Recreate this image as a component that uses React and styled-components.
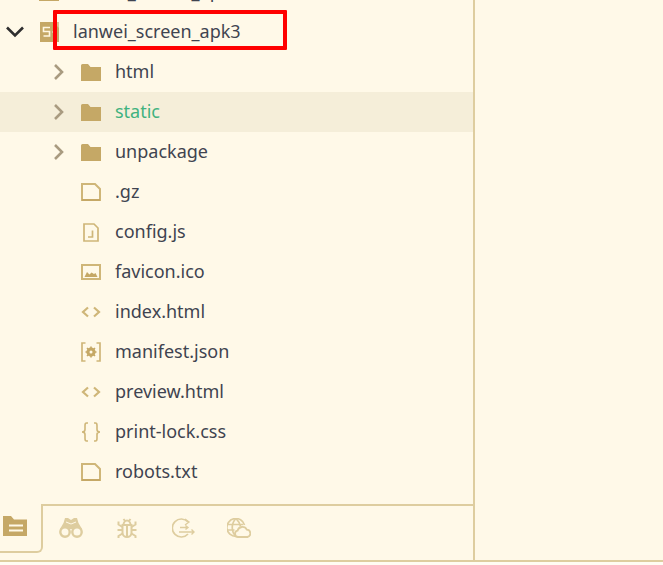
import React from "react";
import styled, { createGlobalStyle } from "styled-components";

const BG = "#fff9e8";
const LINE = "#decd9f";
const TAN = "#c5a866";
const FILE = "#cfb678";

const Global = createGlobalStyle`
  html, body { margin: 0; padding: 0; background: #fffcf3; }
  body { font-family: "Noto Sans", "Open Sans", sans-serif; }
`;

const Page = styled.div`
  width: 663px;
  height: 565px;
  overflow: hidden;
`;
const Frame = styled.div`
  display: flex;
  height: 560px;
  background: ${BG};
  border-bottom: 2px solid ${LINE};
`;
const Sidebar = styled.aside`
  width: 473px;
  display: flex;
  flex-direction: column;
  border-right: 2px solid ${LINE};
`;
const Tree = styled.div`
  flex: 1;
  min-height: 0;
  overflow: hidden;
  display: flex;
  flex-direction: column;
  justify-content: flex-end;
  padding-bottom: 12px;
`;
const Row = styled.div`
  position: relative;
  flex: 0 0 40px;
  height: 40px;
  display: flex;
  align-items: center;
  padding-left: ${(p) => p.$level * 42}px;
  background: ${(p) => (p.$selected ? "#f5eed9" : "transparent")};
`;
const Twist = styled.span`
  flex: 0 0 38px;
  box-sizing: border-box;
  padding-left: ${(p) => (p.$level ? 10 : 5)}px;
  display: flex;
  align-items: center;
`;
const IconSlot = styled.span`
  flex: 0 0 22px;
  height: 22px;
  display: flex;
  align-items: center;
  justify-content: center;
`;
const Name = styled.span`
  margin: 0 0 2px 13px;
  font-size: 18px;
  line-height: 24px;
  white-space: nowrap;
  color: ${(p) => (p.$green ? "#3fb27f" : "#3f4450")};
`;
const Callout = styled.div`
  position: absolute;
  left: 53px;
  top: -2px;
  width: 234px;
  height: 40px;
  box-sizing: border-box;
  border: 4px solid #ff0000;
  border-radius: 1px;
`;
const TabBar = styled.div`
  flex: 0 0 56px;
  display: flex;
  align-items: flex-start;
`;
const ActiveTab = styled.div`
  width: 43px;
  height: 49px;
  box-sizing: border-box;
  padding: 12px 0 0 3px;
  border-right: 2px solid ${LINE};
  border-bottom: 2px solid ${LINE};
  border-bottom-right-radius: 6px;
`;
const TabStrip = styled.div`
  flex: 1;
  height: 56px;
  box-sizing: border-box;
  display: flex;
  padding-top: 12px;
  border-top: 2px solid ${LINE};
`;
const TabSlot = styled.div`
  width: 56px;
  display: flex;
  justify-content: center;
`;
const Blank = styled.main`
  flex: 1;
`;

const Chevron = ({ open }) =>
  open ? (
    <svg width="20" height="14" viewBox="0 0 20 14" fill="none">
      <path d="M2 2.500l8 8 8-8" stroke="#2f2f2f" strokeWidth="2.600" />
    </svg>
  ) : (
    <svg width="14" height="20" viewBox="0 0 14 20" fill="none">
      <path d="M3 3l7 7-7 7" stroke="#a99b80" strokeWidth="2.600" />
    </svg>
  );

const ProjectIcon = () => (
  <svg width="19" height="20" viewBox="0 0 19 20">
    <rect width="19" height="20" fill={TAN} />
    <path d="M13 0h6v6z" fill="#d8c391" />
    <path d="M10 5.500H3.500v4h6v4.500H3.500" fill="none" stroke="#fff7e2" strokeWidth="1.600" />
    <path d="M12.500 10h4.500" stroke="#fff7e2" strokeWidth="1.600" />
  </svg>
);
const Folder = () => (
  <svg width="20" height="17" viewBox="0 0 20 17">
    <path d="M0 1.500A1.500 1.500 0 011.500 0H7l2.500 3H20v14H0z" fill={TAN} />
  </svg>
);
const Doc = () => (
  <svg width="20" height="18" viewBox="0 0 20 18" fill="none">
    <path d="M1 1h13l5 5v11H1z" stroke={FILE} strokeWidth="2" />
    <path d="M1 17h18" stroke={TAN} strokeWidth="2" />
  </svg>
);
const JsIcon = () => (
  <svg width="16" height="19" viewBox="0 0 16 19" fill="none">
    <path d="M1 1h10l4 4v13H1z" stroke={FILE} strokeWidth="1.700" />
    <path d="M9.500 7.500v6.500H5" stroke={FILE} strokeWidth="1.700" />
  </svg>
);
const ImageIcon = () => (
  <svg width="20" height="16" viewBox="0 0 20 16" fill="none">
    <rect x="1" y="1" width="18" height="14" stroke={FILE} strokeWidth="2" />
    <path d="M3.500 13l2.500-5 2.500 2.500 2-2 2.500 1.500 1.500-1 2 4z" fill={TAN} />
  </svg>
);
const CodeIcon = () => (
  <svg width="20" height="12" viewBox="0 0 20 12" fill="none">
    <path d="M7 1.500L2 6l5 4.500M13 1.500L18 6l-5 4.500" stroke={FILE} strokeWidth="2.200" />
  </svg>
);
const GearIcon = () => (
  <svg width="20" height="20" viewBox="0 0 20 20" fill="none">
    <path d="M4.500 1H1v18h3.500M15.500 1H19v18h-3.500" stroke={FILE} strokeWidth="1.700" />
    <circle cx="10" cy="10" r="3.300" stroke={TAN} strokeWidth="2.600" />
    <path d="M10 4.500v11M4.500 10h11M6 6l8 8M14 6l-8 8" stroke={TAN} strokeWidth="1.600" />
    <circle cx="10" cy="10" r="1.500" fill={BG} />
  </svg>
);
const BraceIcon = () => (
  <svg width="20" height="20" viewBox="0 0 20 20" fill="none">
    <path d="M7 1H5.500C4 1 4 2 4 3.500v4C4 9 3 10 1 10c2 0 3 1 3 2.500v4C4 18 4 19 5.500 19H7M13 1h1.500C16 1 16 2 16 3.500v4c0 1.500 1 2.500 3 2.500-2 0-3 1-3 2.500v4c0 1.500 0 2.500-1.500 2.500H13" stroke={FILE} strokeWidth="1.600" />
  </svg>
);

const FolderTab = () => (
  <svg width="24" height="20" viewBox="0 0 24 20">
    <path d="M0 0h8l3 3.500h13V20H0z" fill={TAN} />
    <path d="M6 9.500h14M6 14.500h14" stroke={BG} strokeWidth="2.200" />
  </svg>
);
const Binoculars = () => (
  <svg width="24" height="20" viewBox="0 0 24 20">
    <path d="M6 0h3l3 2 3-2h3l1.500 5 3.500 6H1l3.500-6z" fill={LINE} />
    <circle cx="6" cy="14" r="4.700" fill={BG} stroke={LINE} strokeWidth="2.400" />
    <circle cx="18" cy="14" r="4.700" fill={BG} stroke={LINE} strokeWidth="2.400" />
    <path d="M7 4l5 2 5-2" fill="none" stroke={BG} strokeWidth="1" />
  </svg>
);
const Bug = () => (
  <svg width="20" height="20" viewBox="0 0 20 20" fill="none" stroke={LINE} strokeWidth="2">
    <path d="M5.500 7h9v7.500a4.500 4.500 0 01-9 0zM10 7v12" />
    <path d="M6.500 7a3.500 4.500 0 017 0M6.500 1l2 2.500M13.500 1l-2 2.500" />
    <path d="M5.500 9L1.500 6.500V3.500M14.500 9l4-2.500V3.500M5.500 12H0.500M14.500 12h5M5.500 15.500l-4 2.500v2M14.500 15.500l4 2.500v2" />
  </svg>
);
const RunIcon = () => (
  <svg width="23" height="20" viewBox="0 0 23 20" fill="none" stroke={LINE} strokeWidth="1.400">
    <path d="M16 4A9 9 0 1 0 16 16" strokeWidth="1.700" />
    <path d="M13 1l4 3-4 3" />
    <path d="M8 9.500h8M13.500 7.500l2.500 2-2.500 2M7 14h15M19.500 11.500L22 14l-2.500 2.500" />
  </svg>
);
const GlobeCloud = () => (
  <svg width="24" height="20" viewBox="0 0 24 20" fill="none" stroke={LINE} strokeWidth="1.700">
    <path d="M9 18.500A9 9 0 1117.500 7" />
    <path d="M9 .5c-5 5-5 13 0 18M9 .5c3 3 4 5.500 4.500 8M1 6.500h15M0.500 12h7" />
    <path d="M11 19a3.200 3.200 0 01-.5-6.300 5 5 0 019.300-1 3.700 3.700 0 01.7 7.300z" fill={BG} strokeWidth="1.800" />
  </svg>
);

const files = [
  { name: "html", icon: <Folder />, dir: true },
  { name: "static", icon: <Folder />, dir: true, selected: true, green: true },
  { name: "unpackage", icon: <Folder />, dir: true },
  { name: ".gz", icon: <Doc /> },
  { name: "config.js", icon: <JsIcon /> },
  { name: "favicon.ico", icon: <ImageIcon /> },
  { name: "index.html", icon: <CodeIcon /> },
  { name: "manifest.json", icon: <GearIcon /> },
  { name: "preview.html", icon: <CodeIcon /> },
  { name: "print-lock.css", icon: <BraceIcon /> },
  { name: "robots.txt", icon: <Doc /> },
];

export default function App() {
  return (
    <Page>
      <Global />
      <Frame>
        <Sidebar>
          <Tree>
            <Row $level={0}>
              <Twist $level={0} />
              <IconSlot><Folder /></IconSlot>
              <Name>lanwei_screen_apk</Name>
            </Row>
            <Row $level={0}>
              <Twist $level={0}><Chevron open /></Twist>
              <IconSlot><ProjectIcon /></IconSlot>
              <Name>lanwei_screen_apk3</Name>
              <Callout />
            </Row>
            {files.map((f) => (
              <Row key={f.name} $level={1} $selected={f.selected}>
                <Twist $level={1}>{f.dir && <Chevron />}</Twist>
                <IconSlot>{f.icon}</IconSlot>
                <Name $green={f.green}>{f.name}</Name>
              </Row>
            ))}
          </Tree>
          <TabBar>
            <ActiveTab><FolderTab /></ActiveTab>
            <TabStrip>
              <TabSlot><Binoculars /></TabSlot>
              <TabSlot><Bug /></TabSlot>
              <TabSlot><RunIcon /></TabSlot>
              <TabSlot><GlobeCloud /></TabSlot>
            </TabStrip>
          </TabBar>
        </Sidebar>
        <Blank />
      </Frame>
    </Page>
  );
}
